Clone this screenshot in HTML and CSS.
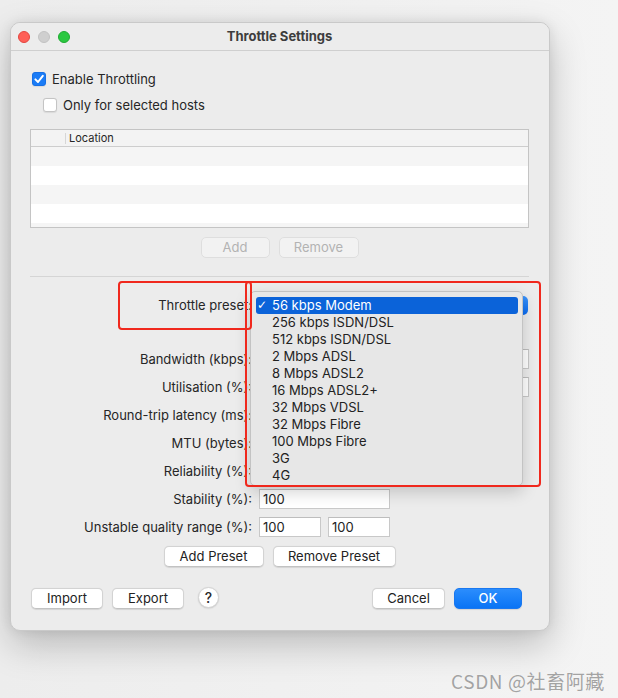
FILE: index.html
```html
<!DOCTYPE html>
<html>
<head>
<meta charset="utf-8">
<title>Throttle Settings</title>
<link rel="stylesheet" href="styles.css">
</head>
<body>
<div class="window">
  <div class="titlebar">
    <div class="lights">
      <span class="light red"></span><span class="light gray"></span><span class="light green"></span>
    </div>
    <div class="title">Throttle Settings</div>
  </div>
  <div class="content">
    <div class="check-row main">
      <span class="cb checked"><svg width="14" height="14" viewBox="0 0 14 14"><path d="M3.4 7.4 L6 10 L10.8 3.9" fill="none" stroke="#fff" stroke-width="2" stroke-linecap="round" stroke-linejoin="round"/></svg></span>
      <span>Enable Throttling</span>
    </div>
    <div class="check-row sub">
      <span class="cb"></span>
      <span>Only for selected hosts</span>
    </div>
    <div class="table">
      <div class="thead"><span class="th-first"></span><span class="th">Location</span></div>
      <div class="trow odd"></div>
      <div class="trow"></div>
      <div class="trow odd"></div>
      <div class="trow"></div>
      <div class="trow odd"></div>
    </div>
    <div class="btn-row center top-btns">
      <button class="btn disabled w-add">Add</button>
      <button class="btn disabled w-remove">Remove</button>
    </div>
    <div class="sep"></div>
    <div class="form">
      <div class="frow preset">
        <span class="lbl">Throttle preset:</span>
        <div class="popup"><span class="popup-arrow"></span></div>
      </div>
      <div class="frow first-field">
        <span class="lbl">Bandwidth (kbps):</span>
        <span class="field wide"></span>
      </div>
      <div class="frow">
        <span class="lbl">Utilisation (%):</span>
        <span class="field wide"></span>
      </div>
      <div class="frow">
        <span class="lbl">Round-trip latency (ms):</span>
        <span class="field"></span>
      </div>
      <div class="frow">
        <span class="lbl">MTU (bytes):</span>
        <span class="field"></span>
      </div>
      <div class="frow">
        <span class="lbl">Reliability (%):</span>
        <span class="field"></span>
      </div>
      <div class="frow">
        <span class="lbl">Stability (%):</span>
        <span class="field">100</span>
      </div>
      <div class="frow">
        <span class="lbl">Unstable quality range (%):</span>
        <span class="field half">100</span>
        <span class="field half">100</span>
      </div>
    </div>
    <div class="btn-row center preset-btns">
      <button class="btn w-addp">Add Preset</button>
      <button class="btn w-remp">Remove Preset</button>
    </div>
    <div class="bottom-row">
      <div class="left-group">
        <button class="btn w-imp">Import</button>
        <button class="btn w-exp">Export</button>
        <button class="help">?</button>
      </div>
      <div class="right-group">
        <button class="btn w-cancel">Cancel</button>
        <button class="btn primary w-ok">OK</button>
      </div>
    </div>
  </div>
</div>

<div class="menu">
  <div class="mitem selected"><span class="tick">✓</span>56 kbps Modem</div>
  <div class="mitem">256 kbps ISDN/DSL</div>
  <div class="mitem">512 kbps ISDN/DSL</div>
  <div class="mitem">2 Mbps ADSL</div>
  <div class="mitem">8 Mbps ADSL2</div>
  <div class="mitem">16 Mbps ADSL2+</div>
  <div class="mitem">32 Mbps VDSL</div>
  <div class="mitem">32 Mbps Fibre</div>
  <div class="mitem">100 Mbps Fibre</div>
  <div class="mitem">3G</div>
  <div class="mitem">4G</div>
</div>

<div class="mark mark-label"></div>
<div class="mark mark-menu"></div>

<div class="watermark">CSDN @社畜阿藏</div>
</body>
</html>
```

FILE: styles.css
```css
* { box-sizing: border-box; }

html, body {
  margin: 0;
  padding: 0;
}

body {
  position: relative;
  width: 618px;
  height: 698px;
  overflow: hidden;
  background: linear-gradient(90deg, #ededed 0%, #f1f1f1 60%, #f4f4f4 100%);
  font-family: Inter, "Liberation Sans", "Noto Sans", sans-serif;
  font-size: 13px;
  color: #262626;
  padding: 22px 0 0 10px;
}

.window {
  width: 540px;
  height: 609px;
  background: #ececec;
  border: 1px solid #c9c9c9;
  border-radius: 10px;
  box-shadow: 0 14px 36px rgba(0,0,0,0.22), 0 0 12px rgba(0,0,0,0.08);
  overflow: hidden;
  display: flex;
  flex-direction: column;
}

.titlebar {
  height: 28px;
  flex: none;
  background: #ececec;
  border-bottom: 1px solid #cfcfcf;
  display: flex;
  align-items: center;
  position: relative;
}

.lights {
  display: flex;
  gap: 8px;
  padding-left: 7px;
}

.light {
  width: 12px;
  height: 12px;
  border-radius: 50%;
  display: block;
}
.light.red { background: #fe5f57; border: 0.5px solid #e2463f; }
.light.gray { background: #cfcfcf; border: 0.5px solid #c2c2c2; }
.light.green { background: #2ac840; border: 0.5px solid #1faa32; }

.title {
  flex: 1;
  text-align: center;
  font-weight: 700;
  font-size: 13px;
  color: #3d3d3d;
  margin-left: -60px;
  margin-top: -2px;
}

.content {
  flex: 1;
  padding: 0 20px 0 19px;
  display: flex;
  flex-direction: column;
}

.check-row {
  display: flex;
  align-items: center;
  height: 20px;
  gap: 6px;
  font-size: 13px;
  color: #262626;
}
.check-row.main { margin-top: 18px; padding-left: 2px; }
.check-row.sub { margin-top: 6px; padding-left: 13px; }

.cb {
  width: 14px;
  height: 14px;
  border-radius: 3px;
  background: #fff;
  border: 1px solid #c4c4c4;
  box-shadow: 0 0.5px 1px rgba(0,0,0,0.08);
  display: block;
  flex: none;
}
.cb.checked {
  background: #1b7cf6;
  border-color: #1670e6;
}
.cb svg { display: block; margin: -1px; }

.table {
  margin-top: 14px;
  width: 499px;
  height: 99px;
  border: 1px solid #c4c4c4;
  background: #fff;
  overflow: hidden;
}
.thead {
  height: 17px;
  background: #f3f3f3;
  border-bottom: 1px solid #cdcdcd;
  display: flex;
  align-items: center;
  font-size: 11px;
  color: #262626;
}
.th-first {
  width: 35px;
  height: 11px;
  border-right: 1px solid #d6d6d6;
}
.th { padding-left: 3px; }
.trow { height: 19px; background: #ffffff; }
.trow.odd { background: #f5f5f5; }

.btn-row {
  display: flex;
  gap: 9px;
}
.btn-row.center { justify-content: center; }
.top-btns { margin-top: 9px; width: 499px; }

.btn {
  font-family: Inter, "Liberation Sans", "Noto Sans", sans-serif;
  font-size: 13px;
  color: #222;
  height: 21px;
  padding: 0;
  background: #fff;
  border: 1px solid #d3d3d3;
  border-bottom-color: #c2c2c2;
  border-radius: 5px;
  box-shadow: 0 0.5px 1px rgba(0,0,0,0.1);
  text-align: center;
  line-height: 19px;
}
.btn.disabled {
  background: #f2f2f2;
  color: #b3b3b3;
  border-color: #dedede;
  box-shadow: none;
}
.btn.primary {
  background: linear-gradient(#2b8dfd, #0a74f5);
  border-color: #1a78f0;
  color: #fff;
  font-weight: 500;
}

.w-add { width: 69px; }
.w-remove { width: 80px; }
.w-addp { width: 100px; }
.w-remp { width: 123px; }
.w-imp { width: 72px; }
.w-exp { width: 72px; }
.w-cancel { width: 73px; }
.w-ok { width: 68px; }

.sep {
  margin-top: 18px;
  width: 499px;
  height: 1px;
  background: #d5d5d5;
}

.form {
  display: flex;
  flex-direction: column;
  gap: 8px;
}

.frow {
  display: flex;
  align-items: center;
  height: 20px;
  gap: 8px;
}
.frow.preset { margin-top: 18px; }
.frow.first-field { margin-top: 26px; }

.lbl {
  width: 222px;
  text-align: right;
  flex: none;
  color: #262626;
  margin-right: -1px;
}

.field {
  width: 131px;
  height: 20px;
  background: #fff;
  border: 1px solid #c8c8c8;
  border-top-color: #bdbdbd;
  padding-left: 3px;
  line-height: 18px;
  color: #222;
}
.field.wide { width: 270px; }
.field.half { width: 62px; }
.frow .field.half + .field.half { margin-left: -1px; }

.popup {
  width: 269px;
  height: 19px;
  background: #fff;
  border-radius: 5px;
  border: 1px solid #d0d0d0;
  position: relative;
}
.popup-arrow {
  position: absolute;
  right: -1px;
  top: -1px;
  width: 17px;
  height: 19px;
  border-radius: 0 5px 5px 0;
  background: linear-gradient(#3a93fb, #0a6cf2);
}

.preset-btns { margin-top: 9px; width: 499px; }

.bottom-row {
  margin-top: 21px;
  display: flex;
  justify-content: space-between;
  width: 492px;
  padding-left: 1px;
}
.left-group, .right-group {
  display: flex;
  gap: 9px;
  align-items: center;
}
.help {
  margin-left: 5px;
  width: 21px;
  height: 21px;
  margin-top: -2px;
  border-radius: 50%;
  background: #fff;
  border: 1px solid #d3d3d3;
  box-shadow: 0 0.5px 1.5px rgba(0,0,0,0.15);
  font-family: Inter, "Liberation Sans", sans-serif;
  font-size: 14px;
  font-weight: 500;
  color: #2a2a2a;
  padding: 0;
  line-height: 19px;
  text-align: center;
}

/* Open pop-up menu (overlay) */
.menu {
  position: absolute;
  left: 250px;
  top: 291px;
  width: 273px;
  height: 195px;
  background: #e7e7e7;
  border: 1px solid #c3c3c3;
  border-radius: 5px;
  box-shadow: 0 6px 16px rgba(0,0,0,0.18);
  padding: 5px 4px 4px 5px;
}
.mitem {
  height: 17px;
  line-height: 17px;
  padding-left: 16px;
  font-size: 13px;
  color: #222;
  position: relative;
  white-space: nowrap;
}
.mitem.selected {
  background: #0b63d9;
  color: #fff;
  border-radius: 3px;
}
.tick {
  position: absolute;
  left: 1px;
  top: 0;
  font-family: "DejaVu Sans", sans-serif;
  font-size: 12px;
}

/* Red annotation boxes */
.mark {
  position: absolute;
  border: 2px solid #f0281d;
  border-radius: 4px;
}
.mark-label { left: 118px; top: 281px; width: 134px; height: 49px; }
.mark-menu { left: 245px; top: 281px; width: 296px; height: 206px; }

.watermark {
  position: absolute;
  left: 451px;
  top: 667px;
  font-family: "Noto Sans CJK SC", "Noto Sans", sans-serif;
  font-size: 19px;
  color: #a3a3a3;
  text-shadow: 0 0 1px #fff;
  letter-spacing: 0.6px;
}
```
